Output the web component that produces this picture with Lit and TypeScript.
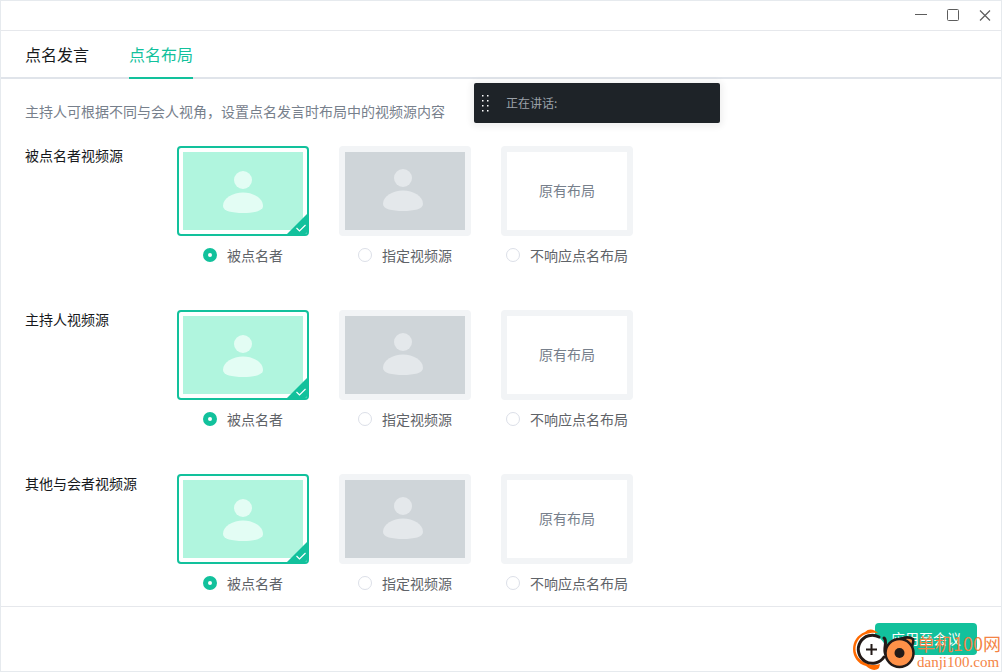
import { LitElement, html, css, svg } from "lit";
import { customElement, property, state } from "lit/decorators.js";

@customElement("source-option")
class SourceOption extends LitElement {
  @property() name = "";
  @property() kind = "pinned";
  @property() text = "";
  @property({ type: Boolean }) checked = false;

  static styles = css`
    :host { display: block; }
    .option { display: flex; flex-direction: column; align-items: center; gap: 9px; cursor: pointer; }
    .card {
      position: relative; box-sizing: border-box; width: 132px; height: 90px; overflow: hidden;
      border: 6px solid #f2f4f6; border-radius: 4px; background: #fff;
      display: flex; align-items: center; justify-content: center;
      font-size: 14px; line-height: 18px; color: #77808c;
    }
    .card.on { border: 2px solid #12c19c; padding: 4px; }
    .caption { padding-bottom: 2px; }
    .art { display: block; width: 120px; height: 78px; background: #cfd5d9; }
    .art.active { background: #b0f5de; }
    .corner { position: absolute; right: 0; bottom: 0; width: 20px; height: 20px; }
    .choice { display: flex; align-items: center; gap: 10px; height: 20px; font-size: 14px; line-height: 20px; color: #5f6368; }
    .radio {
      appearance: none; box-sizing: border-box; margin: 0; width: 14px; height: 14px;
      border: 1px solid #dcdfe8; border-radius: 50%; background: #fff;
    }
    .radio:checked { border: 5px solid #12c19c; }
  `;

  private thumb() {
    if (this.kind === "original") return html`<span class="caption">原有布局</span>`;
    const active = this.kind === "called";
    const shape = svg`<circle cx="60" cy="28" r="9"/><path d="M40 54C40 46 50 40.500 60 40.500S80 46 80 54C80 59 71 61 60 61S40 59 40 54Z"/>`;
    return html`<svg class="art ${active ? "active" : ""}" viewBox="0 0 120 78" aria-hidden="true">
      <g fill=${active ? "#e3fdf4" : "#e4e8eb"} transform=${active ? "" : "translate(-2 -2)"}>${shape}</g>
    </svg>`;
  }

  render() {
    return html`<label class="option">
      <span class="card ${this.checked ? "on" : ""}">
        ${this.thumb()}
        ${this.checked
          ? html`<svg class="corner" viewBox="0 0 20 20" aria-hidden="true">
              <path d="M20 0V20H0Z" fill="#12c19c"/>
              <path d="M9.500 14L12.500 17L18.500 11" fill="none" stroke="#fff" stroke-width="1.200"/>
            </svg>`
          : ""}
      </span>
      <span class="choice">
        <input class="radio" type="radio" name=${this.name} .checked=${this.checked}
          @change=${() => this.dispatchEvent(new CustomEvent("pick", { detail: this.kind }))} />
        <span>${this.text}</span>
      </span>
    </label>`;
  }
}

const OPTIONS = [
  { kind: "called", text: "被点名者" },
  { kind: "pinned", text: "指定视频源" },
  { kind: "original", text: "不响应点名布局" },
];

const GROUPS = [
  { id: "called", title: "被点名者视频源" },
  { id: "host", title: "主持人视频源" },
  { id: "others", title: "其他与会者视频源" },
];

@customElement("app-root")
class AppRoot extends LitElement {
  @state() private picked: Record<string, string> = { called: "called", host: "called", others: "called" };

  static styles = css`
    :host { display: block; font-family: "Noto Sans CJK SC", sans-serif; font-weight: 400; }
    .window {
      position: relative; box-sizing: border-box; min-height: 100vh; overflow: hidden;
      display: flex; flex-direction: column; border: 1px solid #e6eaee; background: #fff;
    }
    button { font: inherit; border: 0; background: none; padding: 0; margin: 0; cursor: pointer; }
    .titlebar { display: flex; justify-content: flex-end; align-items: center; gap: 16px; height: 29px; padding-right: 8px; border-bottom: 1px solid #e6e8ec; }
    .control { display: block; width: 16px; height: 16px; }
    .glyph { display: block; fill: none; stroke: #5d5d5d; }
    .tabs { display: flex; gap: 40px; padding: 0 24px; border-bottom: 2px solid #e0e4ea; }
    .tab { height: 48px; margin-bottom: -2px; box-sizing: border-box; border-bottom: 2px solid transparent; font-size: 16px; line-height: 24px; color: #17191c; }
    .tab.current { color: #12c19c; border-color: #12c19c; }
    .content { flex: 1; padding: 23px 24px 11px; }
    .hint { margin: 0 0 26px; font-size: 14px; line-height: 18px; color: #77808c; }
    .groups { display: flex; flex-direction: column; gap: 45px; }
    .group { display: grid; grid-template-columns: 122px 1fr; column-gap: 30px; }
    .title { font-size: 14px; line-height: 18px; color: #17191c; white-space: nowrap; }
    .options { display: flex; gap: 30px; }
    .footer { display: flex; justify-content: flex-end; padding: 16px 24px; border-top: 1px solid #e6e8ec; }
    .footer .apply { height: 32px; padding: 0 16px 2px; border-radius: 4px; background: #12c19c; color: #fff; font-size: 14px; line-height: 30px; }
    .speaking {
      position: absolute; left: 473px; top: 82px; box-sizing: border-box; width: 246px; height: 40px; padding-left: 8px;
      display: flex; align-items: center; gap: 16px; border-radius: 2px; background: #1e2328;
      box-shadow: 0 1px 6px 3px rgba(0, 0, 0, 0.06); font-size: 12px; line-height: 16px; color: #9ba1a8;
    }
    .brand { position: absolute; right: 0; bottom: 0; display: flex; align-items: flex-end; pointer-events: none; color: #f48445; }
    .brand .words { display: flex; flex-direction: column; }
    .brand .cn { font-size: 18px; line-height: 20px; font-weight: 400; }
    .brand .url { font-family: "Liberation Serif", serif; font-size: 15px; line-height: 18px; }
  `;

  render() {
    return html`<main class="window">
      <header class="titlebar">
        <button class="control" aria-label="最小化"><svg class="glyph" viewBox="0 0 16 16"><path d="M2 6.500H14"/></svg></button>
        <button class="control" aria-label="最大化"><svg class="glyph" viewBox="0 0 16 16"><rect x="2.500" y="1.500" width="11" height="11" rx="1"/></svg></button>
        <button class="control" aria-label="关闭"><svg class="glyph" viewBox="0 0 16 16" stroke-width="1.200"><path d="M3 2.500L13 12.500M13 2.500L3 12.500"/></svg></button>
      </header>
      <nav class="tabs">
        <button class="tab">点名发言</button>
        <button class="tab current" aria-current="page">点名布局</button>
      </nav>
      <section class="content">
        <p class="hint">主持人可根据不同与会人视角，设置点名发言时布局中的视频源内容</p>
        <div class="groups">
          ${GROUPS.map((g) => html`<div class="group" role="radiogroup" aria-labelledby="title-${g.id}">
            <span class="title" id="title-${g.id}">${g.title}</span>
            <div class="options">
              ${OPTIONS.map((o) => html`<source-option .name=${g.id} .kind=${o.kind} .text=${o.text}
                .checked=${this.picked[g.id] === o.kind}
                @pick=${(e: CustomEvent) => (this.picked = { ...this.picked, [g.id]: e.detail })}></source-option>`)}
            </div>
          </div>`)}
        </div>
      </section>
      <footer class="footer"><button class="apply">应用至会议</button></footer>
      <aside class="speaking">
        <svg width="8" height="18" viewBox="0 0 8 18" fill="#fff" aria-hidden="true">
          ${[1, 6, 11, 16].map((y) => svg`<rect x="0" y=${y} width="1.500" height="1.500"/><rect x="5" y=${y} width="1.500" height="1.500"/>`)}
        </svg>
        <span>正在讲话:</span>
      </aside>
      <div class="brand">
        <svg width="64" height="42" viewBox="0 0 64 42" fill="none" aria-hidden="true">
          <path d="M25 4C21 0 16 -1 12 3C4 6 0 13 0 20C0 28 5 35 13 37C17 40 21 43 26 39L27 35C21 37 17 36 13 34C6 31 2.500 26 2.500 20C2.500 14 6 8 12 5.500C16 4 20 3.500 25 4Z" fill="#ff6a00"/>
          <circle cx="19" cy="20.500" r="13.500" fill="#fff"/>
          <path d="M26 8A14 14 0 1 0 31 28" stroke="#231a18" stroke-width="3" stroke-linecap="round"/>
          <path d="M31 9C35 12 30 19 32.500 25" stroke="#231a18" stroke-width="3" stroke-linecap="round"/>
          <path d="M18.500 15V26M13 20.500H24" stroke="#231a18" stroke-width="2"/>
          <path d="M47 10C52 8 57 8 60 10C61 12 60 14 59 17" fill="#ff9148" stroke="#231a18" stroke-width="2.500" stroke-linecap="round"/>
          <circle cx="46.500" cy="24" r="14" fill="#ff9148" stroke="#231a18" stroke-width="2.500"/>
          <circle cx="46.500" cy="24" r="5" fill="#231a18"/>
        </svg>
        <span class="words"><span class="cn">单机100网</span><span class="url">danji100.com</span></span>
      </div>
    </main>`;
  }
}
